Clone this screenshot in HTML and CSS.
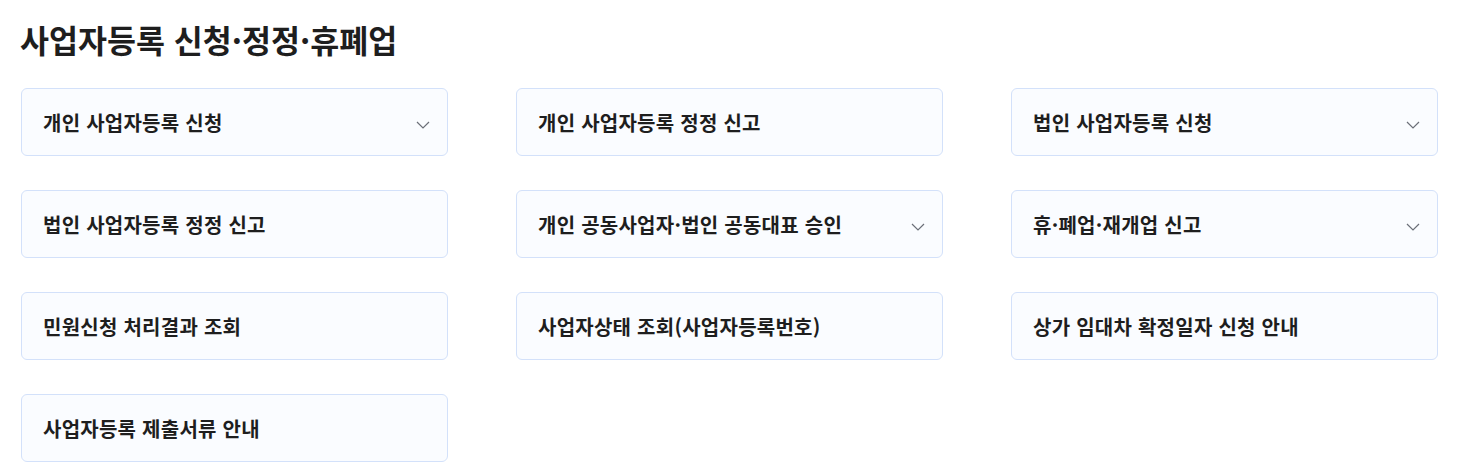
FILE: index.html
```html
<!DOCTYPE html>
<html lang="ko">
<head>
<meta charset="utf-8">
<title>사업자등록 신청·정정·휴폐업</title>
<link rel="stylesheet" href="styles.css">
</head>
<body>
<main class="page">
  <h1 class="title">사업자등록 신청·정정·휴폐업</h1>
  <div class="grid">
    <a class="card has-sub" href="#"><span>개인 사업자등록 신청</span><svg class="chev" viewBox="0 0 14 8"><path d="M1 1l6 6 6-6"/></svg></a>
    <a class="card" href="#"><span>개인 사업자등록 정정 신고</span></a>
    <a class="card has-sub" href="#"><span>법인 사업자등록 신청</span><svg class="chev" viewBox="0 0 14 8"><path d="M1 1l6 6 6-6"/></svg></a>
    <a class="card" href="#"><span>법인 사업자등록 정정 신고</span></a>
    <a class="card has-sub" href="#"><span>개인 공동사업자·법인 공동대표 승인</span><svg class="chev" viewBox="0 0 14 8"><path d="M1 1l6 6 6-6"/></svg></a>
    <a class="card has-sub" href="#"><span>휴·폐업·재개업 신고</span><svg class="chev" viewBox="0 0 14 8"><path d="M1 1l6 6 6-6"/></svg></a>
    <a class="card" href="#"><span>민원신청 처리결과 조회</span></a>
    <a class="card" href="#"><span>사업자상태 조회(사업자등록번호)</span></a>
    <a class="card" href="#"><span>상가 임대차 확정일자 신청 안내</span></a>
    <a class="card" href="#"><span>사업자등록 제출서류 안내</span></a>
  </div>
</main>
</body>
</html>
```
FILE: styles.css
```css
html, body {
  margin: 0;
  padding: 0;
  background: #ffffff;
}
body {
  font-family: "Noto Sans CJK KR", "Noto Sans", sans-serif;
  color: #222222;
}
.page {
  padding: 16px 32px 0 21px;
}
.title {
  margin: 0 0 0 -1px;
  font-size: 31.5px;
  line-height: 46px;
  font-weight: 700;
  color: #1e1e1e;
}
.grid {
  margin-top: 26px;
  display: grid;
  grid-template-columns: repeat(3, 427px);
  column-gap: 68px;
  row-gap: 34px;
}
.card {
  box-sizing: border-box;
  height: 68px;
  display: flex;
  align-items: center;
  justify-content: space-between;
  padding: 0 17px 0 21px;
  border: 1px solid #d3e1fa;
  border-radius: 6px;
  background: #fafcff;
  text-decoration: none;
  color: #1e1e1e;
  font-size: 20px;
  font-weight: 700;
  letter-spacing: 0.25px;
}
.card span {
  margin-top: 0;
}
.chev {
  width: 14px;
  height: 8px;
  margin-top: 6px;
  fill: none;
  stroke: #6b6f78;
  stroke-width: 1.2;
}
```
